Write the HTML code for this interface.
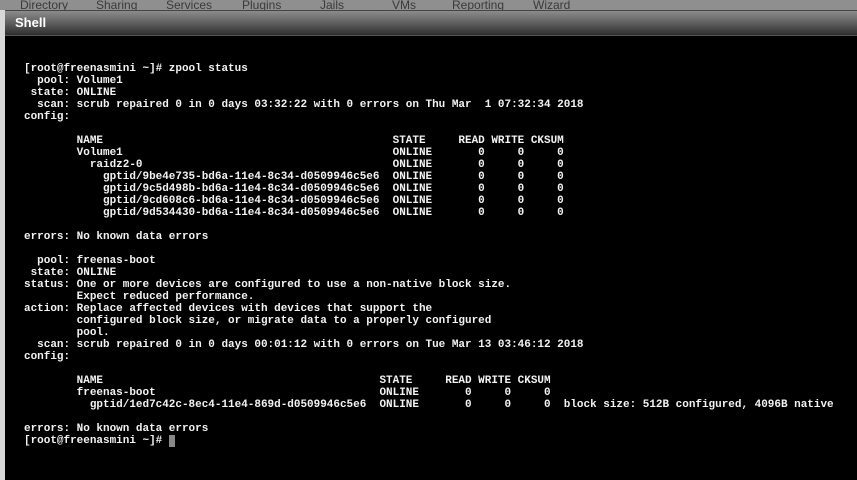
<!DOCTYPE html>
<html><head><meta charset="utf-8"><style>
html,body{margin:0;padding:0;width:857px;height:479px;overflow:hidden;background:#d8d8d8;font-family:"Liberation Sans",sans-serif}
#top{position:absolute;left:0;top:0;width:857px;height:10px;background:#8f8f8f;overflow:hidden}
#top span{position:absolute;top:-2px;font-size:12px;color:#3a3a3a}
#dlg{position:absolute;left:5px;top:10px;width:852px;height:469px;background:#000;border-top:1px solid #444}
#title{height:24px;background:linear-gradient(#8c8c8c,#5a5a5a 55%,#2e2e2e);border-bottom:1px solid #555;color:#fff;font-weight:bold;font-size:13px;line-height:24px;padding-left:10px}
pre{position:absolute;left:19px;top:52px;margin:0;font-family:"Liberation Mono",monospace;font-size:10.98px;line-height:12px;color:#f2f2f2;font-weight:bold;letter-spacing:0}
.cur{display:inline-block;width:6px;height:12px;background:#888;vertical-align:top}
</style></head><body>
<div id="top">
<span style="left:20px">Directory</span><span style="left:96px">Sharing</span><span style="left:166px">Services</span><span style="left:242px">Plugins</span><span style="left:320px">Jails</span><span style="left:392px">VMs</span><span style="left:452px">Reporting</span><span style="left:533px">Wizard</span>
</div>
<div id="dlg">
<div id="title">Shell</div>
<pre>[root@freenasmini ~]# zpool status
  pool: Volume1
 state: ONLINE
  scan: scrub repaired 0 in 0 days 03:32:22 with 0 errors on Thu Mar  1 07:32:34 2018
config:

        NAME                                            STATE     READ WRITE CKSUM
        Volume1                                         ONLINE       0     0     0
          raidz2-0                                      ONLINE       0     0     0
            gptid/9be4e735-bd6a-11e4-8c34-d0509946c5e6  ONLINE       0     0     0
            gptid/9c5d498b-bd6a-11e4-8c34-d0509946c5e6  ONLINE       0     0     0
            gptid/9cd608c6-bd6a-11e4-8c34-d0509946c5e6  ONLINE       0     0     0
            gptid/9d534430-bd6a-11e4-8c34-d0509946c5e6  ONLINE       0     0     0

errors: No known data errors

  pool: freenas-boot
 state: ONLINE
status: One or more devices are configured to use a non-native block size.
        Expect reduced performance.
action: Replace affected devices with devices that support the
        configured block size, or migrate data to a properly configured
        pool.
  scan: scrub repaired 0 in 0 days 00:01:12 with 0 errors on Tue Mar 13 03:46:12 2018
config:

        NAME                                          STATE     READ WRITE CKSUM
        freenas-boot                                  ONLINE       0     0     0
          gptid/1ed7c42c-8ec4-11e4-869d-d0509946c5e6  ONLINE       0     0     0  block size: 512B configured, 4096B native

errors: No known data errors
[root@freenasmini ~]# <span class="cur"></span></pre>
</div>
</body></html>
